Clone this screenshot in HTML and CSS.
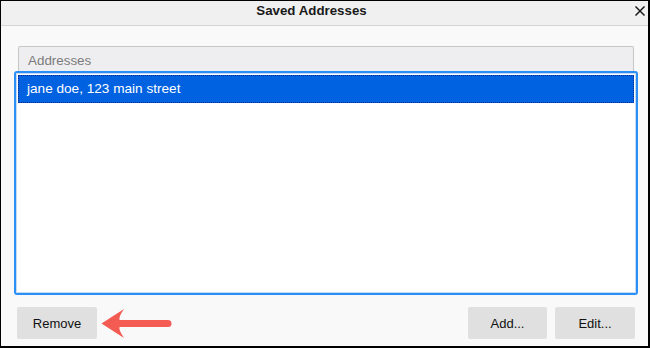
FILE: index.html
```html
<!DOCTYPE html>
<html>
<head>
<meta charset="utf-8">
<link rel="stylesheet" href="styles.css">
</head>
<body>
<div class="window">
  <div class="titlebar">
    <div class="title">Saved Addresses</div>
    <svg class="close" width="10" height="10" viewBox="0 0 10 10"><path d="M1 1 L9 9 M9 1 L1 9" stroke="#1a1a1a" stroke-width="1.5" stroke-linecap="square"/></svg>
  </div>
  <div class="content">
    <div class="header">Addresses</div>
    <div class="ring">
      <div class="list">
        <div class="row">jane doe, 123 main street</div>
      </div>
    </div>
  </div>
  <div class="footer">
    <button class="btn">Remove</button>
    <div class="spacer"></div>
    <button class="btn btn-add">Add...</button>
    <button class="btn btn-edit">Edit...</button>
  </div>
  <svg class="arrow" width="650" height="348" viewBox="0 0 650 348">
    <path d="M101.5 323.5 L124 309 Q118.5 317 119.5 320 L168 320 A3.5 3.5 0 0 1 168 327 L119.5 327 Q118.5 330 124 338 Z" fill="#f45b53"/>
  </svg>
</div>
</body>
</html>
```
FILE: styles.css
```css
html, body {
  margin: 0;
  padding: 0;
}
body {
  width: 650px;
  height: 348px;
  overflow: hidden;
  font-family: "Liberation Sans", Arial, sans-serif;
  font-size: 13px;
}
.window {
  position: relative;
  box-sizing: border-box;
  width: 650px;
  height: 348px;
  border-top: 1px solid #000;
  border-left: 1px solid #000;
  border-right: 2px solid #000;
  border-bottom: 2px solid #000;
  background: #f9f9f9;
  display: flex;
  flex-direction: column;
}
.titlebar {
  position: relative;
  height: 24px;
  background: #f0f0f0;
  border-bottom: 1px solid #d5d5d5;
  box-sizing: content-box;
}
.title {
  padding: 2px 26px 0 0;
  line-height: 16px;
  text-align: center;
  font-weight: bold;
  font-size: 13.3px;
  color: #1a1a1a;
}
.close {
  position: absolute;
  left: 634px;
  top: 5px;
}
.content {
  padding: 20px 10px 0 13px;
}
.header {
  margin: 0 4px;
  height: 20px;
  padding: 4px 0 0 9px;
  line-height: 20px;
  font-size: 13.4px;
  background: #eeeef0;
  border: 1px solid #c6c6c6;
  border-bottom: none;
  border-radius: 2px 2px 0 0;
  color: #7b7b7b;
}
.ring {
  height: 220px;
  border: 2px solid #2a8ff7;
  border-radius: 3px;
}
.list {
  height: 220px;
  border: 1px solid #c4d9f2;
  background: #fff;
  padding: 1px;
  box-sizing: border-box;
}
.row {
  height: 28px;
  line-height: 28px;
  padding-left: 9px;
  font-size: 13.6px;
  background: #0062e1;
  color: #fff;
  outline: 1px dotted #0a2f8a;
  outline-offset: -1px;
}
.footer {
  display: flex;
  gap: 8px;
  padding: 12px 13px 0 16px;
}
.spacer {
  flex: 1;
}
.btn {
  width: 80px;
  height: 32px;
  border: none;
  border-radius: 2px;
  background: #e0e0e0;
  font-family: "Liberation Sans", Arial, sans-serif;
  font-size: 13px;
  color: #111;
  padding: 0;
}
.btn-add {
  width: 79px;
}
.btn-edit {
  width: 80px;
}
.arrow {
  position: absolute;
  left: -1px;
  top: -1px;
  pointer-events: none;
}
```
